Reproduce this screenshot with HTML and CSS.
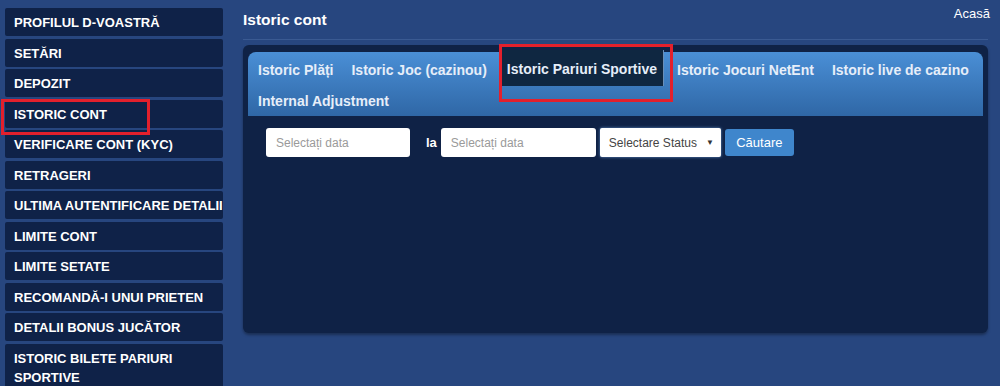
FILE: index.html
```html
<!DOCTYPE html>
<html lang="ro">
<head>
    <meta charset="UTF-8">
    <title>Istoric cont</title>
    <link rel="stylesheet" href="styles.css">
</head>
<body>
    <nav class="sidebar">
        <a class="side-item">Profilul d-voastră</a>
        <a class="side-item">Setări</a>
        <a class="side-item">Depozit</a>
        <a class="side-item marked">Istoric cont</a>
        <a class="side-item">Verificare cont (KYC)</a>
        <a class="side-item">Retrageri</a>
        <a class="side-item">Ultima autentificare detalii</a>
        <a class="side-item">Limite cont</a>
        <a class="side-item">Limite setate</a>
        <a class="side-item">Recomandă-i unui prieten</a>
        <a class="side-item">Detalii bonus jucător</a>
        <a class="side-item">Istoric bilete pariuri sportive</a>
    </nav>

    <main class="content">
        <div class="page-head">
            <h1>Istoric cont</h1>
            <a class="home-link">Acasă</a>
        </div>

        <section class="panel">
            <ul class="tabs">
                <li class="tab">Istoric Plăți</li>
                <li class="tab">Istoric Joc (cazinou)</li>
                <li class="tab active">Istoric Pariuri Sportive</li>
                <li class="tab">Istoric Jocuri NetEnt</li>
                <li class="tab">Istoric live de cazino</li>
                <li class="tab">Internal Adjustment</li>
            </ul>

            <form class="filters">
                <input type="text" class="date-input" placeholder="Selectați data">
                <span class="to-label">la</span>
                <input type="text" class="date-input second" placeholder="Selectați data">
                <div class="status-select">
                    <span>Selectare Status</span>
                    <span class="arrow">&#9660;</span>
                </div>
                <button type="button" class="search-btn">Căutare</button>
            </form>
        </section>
    </main>
</body>
</html>
```

FILE: styles.css
```css
* {
  margin: 0;
  padding: 0;
  box-sizing: border-box;
  font-family: "Liberation Sans", Arial, sans-serif;
}

body {
  display: flex;
  background: #27467f;
  color: #fff;
  height: 386px;
  overflow: hidden;
}

.sidebar {
  width: 223px;
  padding: 8px 0 0 5px;
  display: flex;
  flex-direction: column;
  flex-shrink: 0;
}

.side-item {
  display: block;
  background: #0f2248;
  border-radius: 2px;
  padding: 5px 0 4px 9px;
  margin-bottom: 2.5px;
  line-height: 19px;
  font-size: 13px;
  font-weight: bold;
  text-transform: uppercase;
  white-space: normal;
  position: relative;
}

.side-item.marked {
  z-index: 2;
}

.side-item.marked::after {
  content: "";
  position: absolute;
  left: -4px;
  top: -1px;
  width: 143px;
  height: 30px;
  border: 3px solid #e3202c;
}

.content {
  flex: 1;
  padding: 0 12px 0 20px;
}

.page-head {
  display: flex;
  justify-content: space-between;
  border-bottom: 1px solid #3a5a92;
  height: 40px;
  margin-bottom: 5px;
}

.page-head h1 {
  font-size: 15.5px;
  font-weight: bold;
  padding-top: 11px;
}

.home-link {
  font-size: 13px;
  padding-top: 6px;
  margin-right: -2px;
}

.panel {
  background: #0f2246;
  border-radius: 6px;
  height: 288px;
  padding: 7px 5px;
  box-shadow: 0 2px 3px rgba(0, 0, 0, .35);
}

.tabs {
  list-style: none;
  display: flex;
  flex-wrap: wrap;
  padding: 3px 0 2px 1px;
  height: 64px;
  border-radius: 8px 8px 0 0;
  background: linear-gradient(to bottom, #4a8fd6, #2f67a6);
}

.tab {
  padding: 0 9px;
  height: 30px;
  line-height: 30px;
  font-size: 14px;
  font-weight: bold;
  color: #e6eef9;
}

.tab.active {
  position: relative;
  background: #0f2741;
  padding: 5px 6px 0;
  height: 36px;
  margin: -5px 5px 0 5px;
  line-height: 29px;
  box-shadow: 1px 0 0 #6b8fb8;
}

.tab.active::after {
  content: "";
  position: absolute;
  left: -2px;
  top: -6px;
  width: 168px;
  height: 52px;
  border: 3px solid #e3202c;
}

.filters {
  display: flex;
  align-items: center;
  padding: 12px 0 0 18px;
  height: 41px;
}

.date-input {
  width: 144px;
  height: 29px;
  border: none;
  border-radius: 3px;
  padding: 0 10px;
  font-size: 12px;
  background: #fff;
}

.date-input.second {
  width: 155px;
}

.date-input::placeholder {
  color: #9a9a9a;
}

.to-label {
  font-size: 13px;
  font-weight: bold;
  margin: 0 4px 0 16px;
}

.status-select {
  margin-left: 4px;
  width: 121px;
  height: 29px;
  background: #fff;
  color: #444;
  border-radius: 2px;
  font-size: 12px;
  display: flex;
  align-items: center;
  justify-content: space-between;
  padding: 0 7px 0 9px;
  box-shadow: 0 0 3px rgba(120, 170, 230, .8);
}

.status-select .arrow {
  font-size: 8px;
  color: #333;
}

.search-btn {
  margin-left: 4px;
  width: 69px;
  height: 27px;
  border: none;
  border-radius: 3px;
  background: #3f86cc;
  color: #fff;
  font-size: 13px;
}
```
